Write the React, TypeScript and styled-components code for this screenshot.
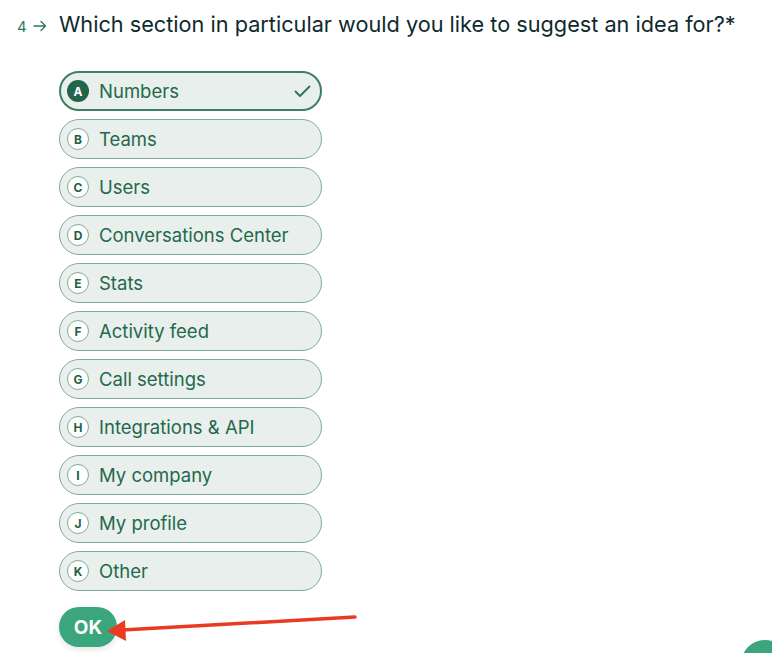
import React from "react";
import styled, { createGlobalStyle } from "styled-components";

const Global = createGlobalStyle`
  html, body { margin: 0; padding: 0; background: #ffffff; }
  body { font-family: Inter, "Noto Sans", sans-serif; -webkit-font-smoothing: antialiased; }
  #root { width: 772px; height: 653px; overflow: hidden; position: relative; }
`;

const Page = styled.div`
  position: relative;
  width: 772px;
  height: 653px;
  overflow: hidden;
  box-sizing: border-box;
  padding-top: 9px;
`;

const Header = styled.div`
  display: flex;
  align-items: baseline;
`;

const Num = styled.div`
  width: 59px;
  box-sizing: border-box;
  padding-left: 17px;
  display: flex;
  align-items: baseline;
  gap: 6px;
  color: #2f7a57;
  font-size: 15px;
`;

const Question = styled.h1`
  margin: 0;
  font-size: 21.7px;
  font-weight: 400;
  line-height: 30px;
  color: #0f2a2e;
  letter-spacing: 0;
`;

const List = styled.div`
  margin-top: 32px;
  margin-left: 59px;
  display: flex;
  flex-direction: column;
  gap: 8px;
  width: 263px;
`;

const Option = styled.div<{ $selected?: boolean }>`
  box-sizing: border-box;
  height: 40px;
  border-radius: 20px;
  background: #e9efec;
  border: ${(p) => (p.$selected ? "2px solid #3d7f62" : "1px solid #7eae97")};
  padding-left: ${(p) => (p.$selected ? "6px" : "7px")};
  padding-right: ${(p) => (p.$selected ? "9px" : "10px")};
  display: flex;
  align-items: center;
  gap: 10px;
`;

const Badge = styled.div<{ $selected?: boolean }>`
  box-sizing: border-box;
  width: 22px;
  height: 22px;
  border-radius: 50%;
  flex: none;
  display: flex;
  align-items: center;
  justify-content: center;
  font-size: 12px;
  font-weight: 700;
  background: ${(p) => (p.$selected ? "#226549" : "#ffffff")};
  color: ${(p) => (p.$selected ? "#ffffff" : "#1f5f45")};
  border: ${(p) => (p.$selected ? "none" : "1px solid #7eae97")};
`;

const Label = styled.span`
  flex: 1;
  font-size: 18.5px;
  color: #226a4b;
  line-height: 24px;
`;

const Check = styled.svg`
  flex: none;
`;

const OkButton = styled.button`
  margin-top: 16px;
  margin-left: 59px;
  width: 58px;
  height: 40px;
  border: none;
  border-radius: 20px;
  background: #3ba57d;
  color: #ffffff;
  font-family: Inter, "Noto Sans", sans-serif;
  font-weight: 700;
  font-size: 19px;
  box-shadow: 0 2px 6px rgba(0, 0, 0, 0.12);
  display: flex;
  align-items: center;
  justify-content: center;
  padding: 0;
`;

const ArrowOverlay = styled.svg`
  position: absolute;
  left: 0;
  top: 0;
  pointer-events: none;
`;

const CornerBubble = styled.div`
  position: absolute;
  left: 741px;
  top: 640px;
  width: 48px;
  height: 48px;
  border-radius: 50%;
  background: #3ba57d;
`;

const options = [
  ["A", "Numbers"],
  ["B", "Teams"],
  ["C", "Users"],
  ["D", "Conversations Center"],
  ["E", "Stats"],
  ["F", "Activity feed"],
  ["G", "Call settings"],
  ["H", "Integrations & API"],
  ["I", "My company"],
  ["J", "My profile"],
  ["K", "Other"],
];

export default function App() {
  return (
    <Page>
      <Global />
      <Header>
        <Num>
          <span>4</span>
          <svg width="14" height="12" viewBox="0 0 14 12">
            <path d="M1 6h11.5M8 1.5L12.5 6 8 10.5" fill="none" stroke="#2f7a57" strokeWidth="1.4" strokeLinecap="round" strokeLinejoin="round" />
          </svg>
        </Num>
        <Question>Which section in particular would you like to suggest an idea for?*</Question>
      </Header>
      <List>
        {options.map(([k, label], i) => (
          <Option key={k} $selected={i === 0}>
            <Badge $selected={i === 0}>{k}</Badge>
            <Label>{label}</Label>
            {i === 0 && (
              <Check width="17" height="13" viewBox="0 0 17 13">
                <path d="M1.5 6.5l4.5 4.5L15.5 1.5" fill="none" stroke="#2f7157" strokeWidth="1.8" strokeLinecap="round" strokeLinejoin="round" />
              </Check>
            )}
          </Option>
        ))}
      </List>
      <OkButton>OK</OkButton>
      <ArrowOverlay width="772" height="653" viewBox="0 0 772 653">
        <line x1="355" y1="617" x2="122" y2="630" stroke="#ea3a1f" strokeWidth="3.5" strokeLinecap="round" />
        <polygon points="107,631 125,620 126,641" fill="#ea3a1f" />
      </ArrowOverlay>
      <CornerBubble />
    </Page>
  );
}
